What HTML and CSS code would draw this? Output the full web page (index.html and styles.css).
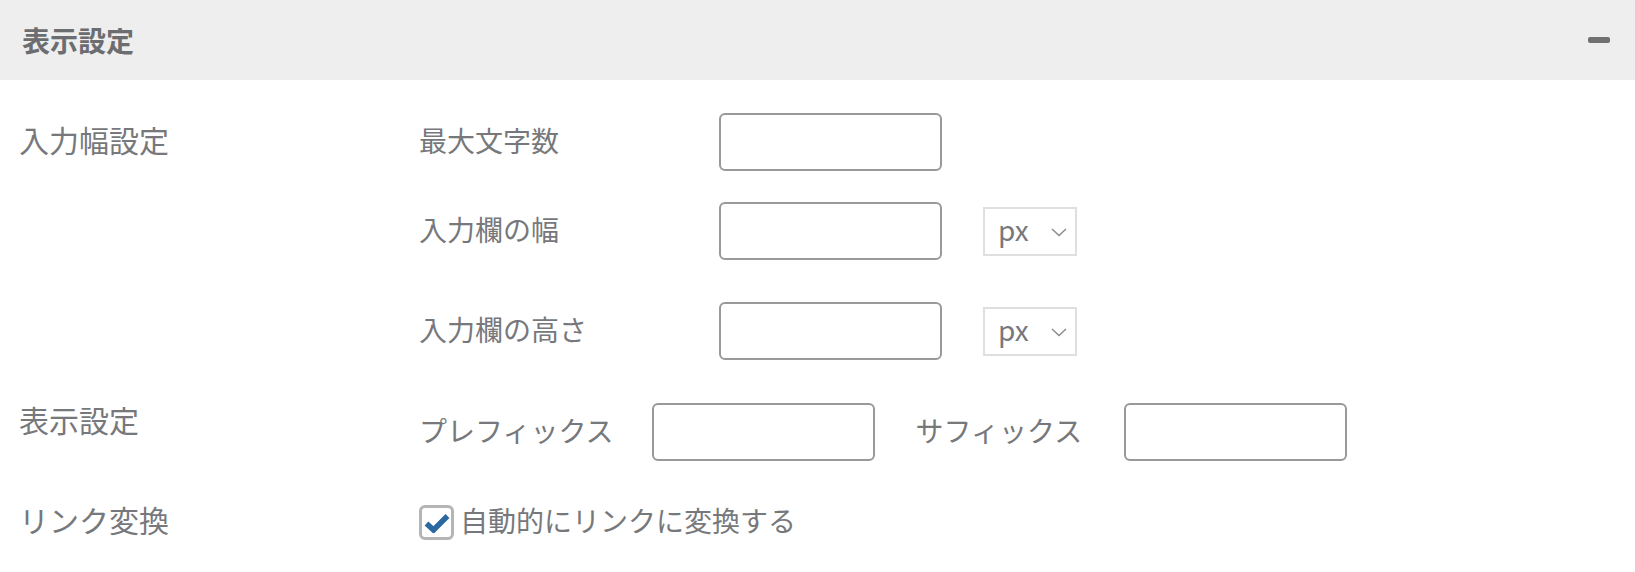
FILE: index.html
```html
<!DOCTYPE html>
<html lang="ja">
<head>
<meta charset="utf-8">
<title>表示設定</title>
<link rel="stylesheet" href="styles.css">
</head>
<body>
<section class="panel">
  <header class="panel-head">
    <h2 class="panel-title">表示設定</h2>
    <span class="toggle" aria-label="閉じる"></span>
  </header>
  <div class="panel-body">
    <div class="group">
      <div class="group-label">入力幅設定</div>
      <div class="group-fields">
        <div class="field r1">
          <label class="field-label">最大文字数</label>
          <input class="text-input" type="text">
        </div>
        <div class="field r2">
          <label class="field-label">入力欄の幅</label>
          <input class="text-input" type="text">
          <div class="unit-select"><span>px</span><svg width="16" height="9" viewBox="0 0 16 9"><path d="M1 1 L8 7.5 L15 1" fill="none" stroke="#8a8a8a" stroke-width="1.4"/></svg></div>
        </div>
        <div class="field r3">
          <label class="field-label">入力欄の高さ</label>
          <input class="text-input" type="text">
          <div class="unit-select"><span>px</span><svg width="16" height="9" viewBox="0 0 16 9"><path d="M1 1 L8 7.5 L15 1" fill="none" stroke="#8a8a8a" stroke-width="1.4"/></svg></div>
        </div>
      </div>
    </div>
    <div class="group g2">
      <div class="group-label short">表示設定</div>
      <div class="group-fields">
        <div class="field">
          <label class="inline-label">プレフィックス</label>
          <input class="text-input spaced" type="text">
          <label class="inline-label wide">サフィックス</label>
          <input class="text-input" type="text">
        </div>
      </div>
    </div>
    <div class="group g3">
      <div class="group-label">リンク変換</div>
      <div class="group-fields">
        <label class="field check-field">
          <span class="checkbox"><svg width="26" height="20" viewBox="0 0 26 20"><path d="M2.5 10.5 L9.5 17 L23.5 3" fill="none" stroke="#2b67a0" stroke-width="5.5" stroke-linejoin="miter" stroke-linecap="butt"/></svg></span>
          <span class="check-text">自動的にリンクに変換する</span>
        </label>
      </div>
    </div>
  </div>
</section>
</body>
</html>
```

FILE: styles.css
```css
* { box-sizing: border-box; }
html, body { margin: 0; padding: 0; background: #ffffff; }
body {
  font-family: "Noto Sans CJK JP", "Noto Sans", sans-serif;
  color: #77787b;
  width: 1635px;
}
.panel { width: 1635px; }
.panel-head {
  height: 80px;
  background: #eeeeee;
  display: flex;
  align-items: center;
  justify-content: space-between;
  padding: 0 25px 0 22px;
}
.panel-title {
  margin: 0;
  font-size: 28px;
  font-weight: 700;
  color: #6c6d70;
  line-height: 1;
}
.toggle {
  width: 22px;
  height: 6px;
  border-radius: 2px;
  background: #707070;
}
.panel-body { padding-top: 33px; }
.group {
  display: grid;
  grid-template-columns: 419px 1fr;
  align-items: start;
}
.group-label {
  padding-left: 19px;
  font-size: 30px;
  line-height: 52px;
}
.group-label.short { line-height: 32px; }
.group-fields { display: flex; flex-direction: column; }
.field {
  display: flex;
  align-items: center;
  height: 58px;
  font-size: 28px;
}
.r1 { margin-bottom: 31px; }
.r2 { margin-bottom: 42px; }
.r3 { margin-bottom: 43px; }
.g2 { margin-bottom: 32px; }
.field-label {
  width: 300px;
  padding-bottom: 5px;
}
.inline-label {
  margin-right: 38px;
  padding-bottom: 5px;
}
.inline-label.wide { margin-right: 42px; }
.text-input {
  width: 223px;
  height: 58px;
  border: 2px solid #999999;
  border-radius: 6px;
  background: #fff;
  margin: 0;
  padding: 0 10px;
  font: inherit;
}
.text-input.spaced { margin-right: 41px; }
.unit-select {
  margin-left: 41px;
  width: 94px;
  height: 49px;
  border: 2px solid #dfdfdf;
  background: #fff;
  display: flex;
  align-items: center;
  justify-content: space-between;
  padding: 0 8px 0 13px;
  font-size: 28px;
  color: #77787b;
}
.unit-select span { line-height: 1; padding-bottom: 4px; }
.unit-select svg { display: block; margin-top: 2px; }
.check-field { cursor: pointer; }
.checkbox {
  width: 35px;
  height: 35px;
  border: 3px solid #b5b5b5;
  border-radius: 6px;
  background: #fff;
  display: flex;
  align-items: center;
  justify-content: center;
  margin-left: 0;
  margin-right: 6px;
}
.checkbox svg { display: block; margin-top: 1px; }
.check-text { padding-bottom: 4px; }
```
